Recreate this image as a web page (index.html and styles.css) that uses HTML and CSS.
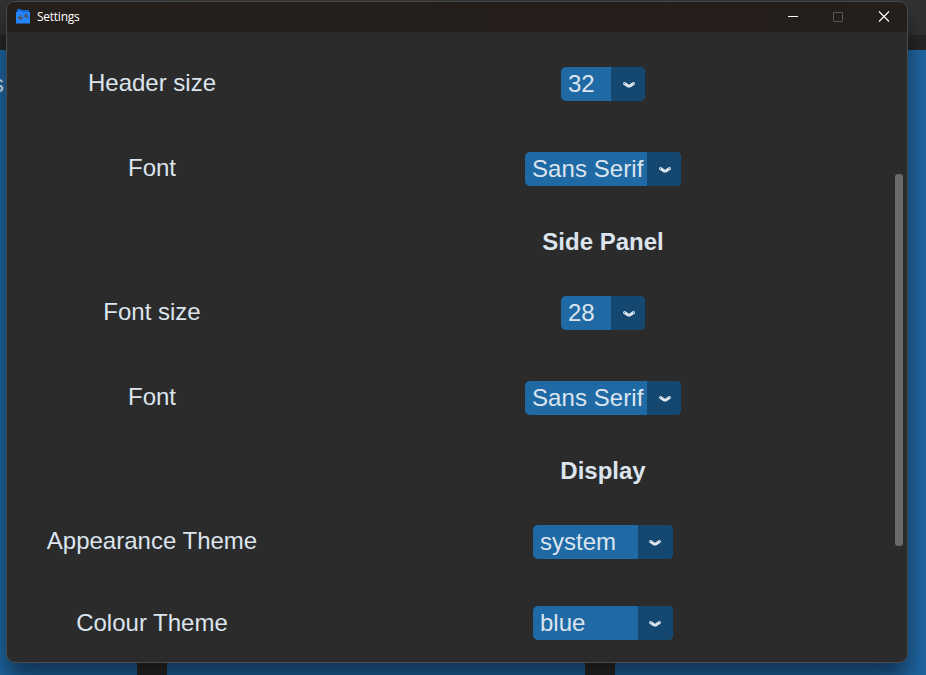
FILE: index.html
```html
<!DOCTYPE html>
<html lang="en">
<head>
<meta charset="utf-8">
<title>Settings</title>
<link rel="stylesheet" href="styles.css">
</head>
<body>
<svg class="symbols" width="0" height="0" aria-hidden="true">
  <symbol id="chevron" viewBox="0 0 14 8"><path class="chevron-line" d="M2.500 2.500L5.500 4.600Q7 5.400 8.500 4.600L11.500 2.500"/><path class="chevron-hole" d="M2 2h1v1H2zM11 2h1v1h-1z"/></symbol>
</svg>
<div class="desktop">
  <div class="backdrop-top"></div>
  <div class="backdrop-strip"></div>
  <div class="backdrop-body"><span class="backdrop-text">s</span></div>
  <div class="divider divider-left"></div>
  <div class="divider divider-right"></div>
  <main class="window">
    <header class="titlebar">
      <svg class="app-icon" width="14" height="15" viewBox="0 0 14 15"><path fill="#1468d4" d="M1 0h4l1 1h7v3H1z"/><path fill="#2384fb" d="M0 3h1l1-1h3l1 1h8v11.500H0z"/><g fill="#4c5a70"><path d="M2 8l1-1h1V6h1v2h3V6h1V5l2-1v2h1v3h-2V8H8L6 10v1H4v-1H2z"/></g></svg>
      <h1 class="title">Settings</h1>
      <svg class="controls" width="102" height="12" viewBox="0 0 102 12"><path fill="#fff" d="M0 5h10v1H0z"/><rect x="45.500" y="1.500" width="9" height="9" rx=".5" fill="none" stroke="#5b5651"/><path d="M91 .5l10 10M101 .5L91 10.500" fill="none" stroke="#fff" stroke-width="1.100"/></svg>
    </header>
    <div class="content">
      <section class="settings">
        <div class="row"><label>Header size</label><div class="select number"><span>32</span><i><svg class="arrow" width="14" height="8"><use href="#chevron"/></svg></i></div></div>
        <div class="row"><label>Font</label><div class="select family"><span>Sans Serif</span><i><svg class="arrow" width="14" height="8"><use href="#chevron"/></svg></i></div></div>
      </section>
      <section class="settings">
        <h2>Side Panel</h2>
        <div class="row"><label>Font size</label><div class="select number"><span>28</span><i><svg class="arrow" width="14" height="8"><use href="#chevron"/></svg></i></div></div>
        <div class="row"><label>Font</label><div class="select family"><span>Sans Serif</span><i><svg class="arrow" width="14" height="8"><use href="#chevron"/></svg></i></div></div>
      </section>
      <section class="settings display">
        <h2>Display</h2>
        <div class="row"><label>Appearance Theme</label><div class="select theme"><span>system</span><i><svg class="arrow" width="14" height="8"><use href="#chevron"/></svg></i></div></div>
        <div class="row last"><label>Colour Theme</label><div class="select theme"><span>blue</span><i><svg class="arrow" width="14" height="8"><use href="#chevron"/></svg></i></div></div>
      </section>
      <div class="scrollbar"></div>
    </div>
  </main>
</div>
</body>
</html>
```
FILE: styles.css
```css
* { box-sizing: border-box; }
body { margin: 0; overflow: hidden; font-family: "Liberation Sans", Arial, sans-serif; }
.symbols { position: absolute; }
.desktop { position: relative; width: 926px; height: 675px; overflow: hidden; display: flex; flex-direction: column; }
.backdrop-top { height: 35px; background: #323232; }
.backdrop-strip { height: 15px; background: #262626; }
.backdrop-body { flex: 1; background: #1f66a3; }
.backdrop-text { position: absolute; left: -8px; top: 70px; font-size: 24px; color: #dce4ee; }
.divider { position: absolute; top: 660px; width: 30px; height: 15px; background: #292929; }
.divider-left { left: 137px; }
.divider-right { left: 585px; }
.window {
  position: absolute; left: 6px; top: 1px; width: 902px; height: 662px;
  border: 1px solid #474b4f; border-radius: 9px; overflow: hidden;
  background: #2b2b2b;
  box-shadow: 0 16px 24px rgba(0, 0, 0, .5);
}
.titlebar { height: 30px; padding: 0 17px 0 9px; display: flex; align-items: center; background: linear-gradient(90deg, #241f1b, #231f1d 45%, #251d19 60%, #241f1b); }
.app-icon { margin-right: 7px; position: relative; top: -1px; }
.title { margin: 0; flex: 1; font: 400 12px/16px "Open Sans", "Noto Sans", sans-serif; color: #fff; letter-spacing: -.25px; }
.content { position: relative; height: 630px; padding: 35px 24px 0 1px; color: #dce4ee; font-size: 24px; }
.settings { display: flex; flex-direction: column; gap: 51px; margin-bottom: 39px; }
.display { gap: 47px; }
.row { height: 34px; display: grid; grid-template-columns: 288px 560px; column-gap: 27px; align-items: center; justify-items: center; }
.row label { line-height: 32px; padding-bottom: 2px; }
.last label { padding-bottom: 0; }
h2 { height: 34px; margin: 0 0 -14px 315px; width: 560px; text-align: center; font-size: 24px; line-height: 34px; }
.display h2 { margin-bottom: -10px; }
.select { display: flex; height: 34px; border-radius: 5px; overflow: hidden; background: #1f6aa5; }
.select span { flex: 1; padding-left: 7px; line-height: 34px; white-space: nowrap; }
.select i { width: 34px; padding-left: 2px; display: flex; align-items: center; justify-content: center; background: #144870; }
.number { width: 84px; }
.family { width: 156px; }
.family span { letter-spacing: .08px; }
.theme { width: 140px; }
.theme i { width: 35px; padding: 0 1px 0 0; }
.arrow { display: block; margin-top: 2px; }
.chevron-line { fill: none; stroke: #dce4ee; stroke-width: 3; stroke-linecap: round; stroke-linejoin: round; }
.chevron-hole { fill: #144870; opacity: .6; }
.scrollbar { position: absolute; top: 142px; right: 4px; width: 8px; height: 372px; border-radius: 3px; background: #696969; }
```
